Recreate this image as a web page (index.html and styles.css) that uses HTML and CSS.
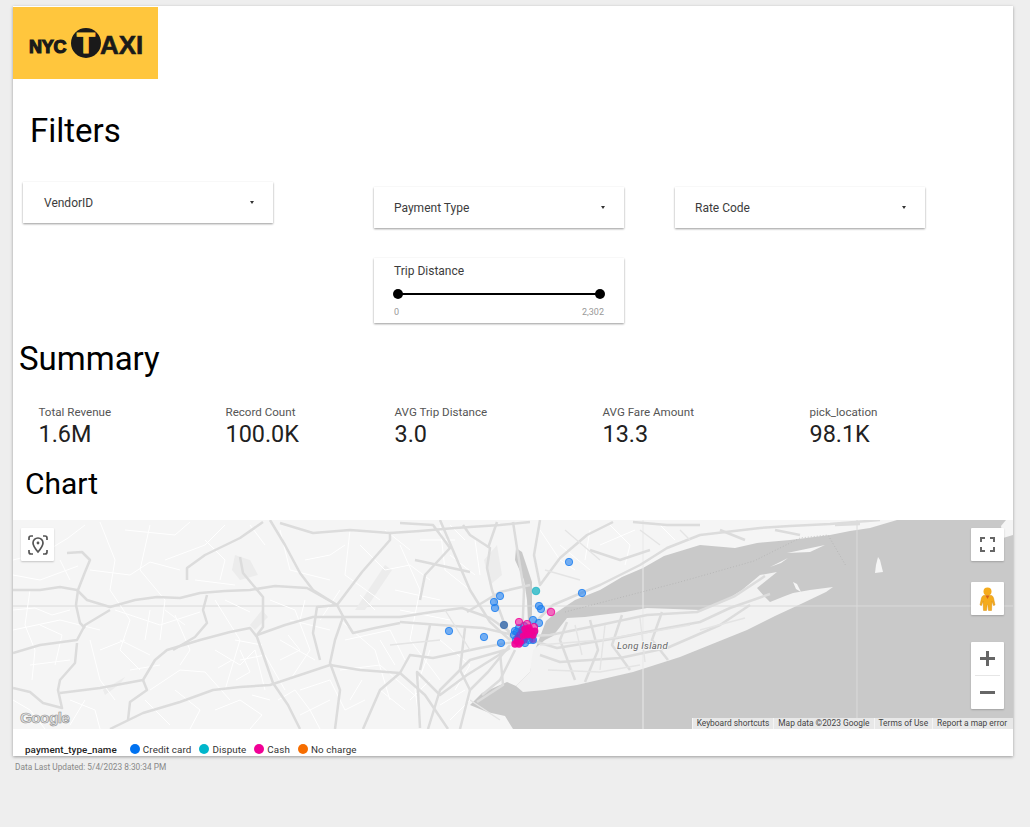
FILE: index.html
```html
<!DOCTYPE html>
<html>
    <head>
        <title>NYC Taxi Report</title>
        <link rel="stylesheet" href="styles.css">
    </head>
    <body>
        <div class="report">
            <div class="logo">
                <span class="logo-nyc">NYC</span>
                <span class="logo-circle">T</span>
                <span class="logo-axi">AXI</span>
            </div>

            <h1 class="title-filters">Filters</h1>

            <div class="filters">
                <div class="filter filter-vendor"><span>VendorID</span><i class="caret"></i></div>
                <div class="filter filter-low"><span>Payment Type</span><i class="caret"></i></div>
                <div class="filter filter-low"><span>Rate Code</span><i class="caret"></i></div>
                <div class="slider-card">
                    <div class="slider-label">Trip Distance</div>
                    <div class="slider-track"><b class="knob"></b><b class="knob"></b></div>
                    <div class="slider-range"><span>0</span><span>2,302</span></div>
                </div>
            </div>

            <h1 class="title-summary">Summary</h1>

            <div class="scorecards">
                <div class="score"><div class="score-label">Total Revenue</div><div class="score-value">1.6M</div></div>
                <div class="score"><div class="score-label">Record Count</div><div class="score-value">100.0K</div></div>
                <div class="score"><div class="score-label">AVG Trip Distance</div><div class="score-value">3.0</div></div>
                <div class="score"><div class="score-label">AVG Fare Amount</div><div class="score-value">13.3</div></div>
                <div class="score"><div class="score-label">pick_location</div><div class="score-value">98.1K</div></div>
            </div>

            <h1 class="title-chart">Chart</h1>

            <div class="map">
                <svg class="map-base" viewBox="13 520 1000 209" width="1000" height="209">
                    <rect x="13" y="520" width="1000" height="209" fill="#f5f5f5"/>

                    <!-- sound and ocean -->
                    <path fill="#c9c9c9" d="M546 621 L557 612 L575 600 L600 590 L622 577 L643 568 L664 556 L700 545 L735 548 L757 543 L790 540 L830 535 L850 531 L870 528 L897 520 L1013 520 L1013 729 L513 729 L505 716 L487 712 L470 705 L482 693 L507 682 L516 686 L530 672 L535 650 Z"/>
                    <path fill="#c9c9c9" d="M516 548 L522 552 L532 582 L532 615 L528 622 L527 600 L524 580 L515 560 Z"/>
                    <path fill="#f5f5f5" d="M1013 520 L1013 535 L1003 538 L1001 526 L1006 520 Z"/>

                    <!-- long island -->
                    <path fill="#f2f2f2" d="M533 650 L545 640 L553 636 L567 618 L585 617 L600 615 L625 612 L647 608 L700 610 L723 602 L742 590 L760 575 L777 572 L762 584 L757 588 L764 596 L770 602 L785 596 L793 593 L810 590 L833 587 L826 592 L803 603 L775 616 L747 630 L680 657 L633 672 L577 685 L545 690 L523 692 L516 686 L530 672 Z"/>
                    <path fill="#f5f5f5" d="M793 582 L797 584 L801 592 L796 589 Z M876 565 L878 557 L880 560 L883 572 L875 573 Z M770 567 L788 558 L781 563 Z M787 553 L825 545 L810 552 Z"/>

                    <!-- grid seams -->
                    <path fill="none" stroke="#dadada" stroke-width="1" d="M857 520 V718 M13 606 H1013"/>
                    <path fill="none" stroke="#e9e9e9" stroke-width="1" d="M643 520 V729"/>
                    <path fill="none" stroke="#aaaaaa" stroke-width=".6" stroke-dasharray="1 2" d="M565 612 L680 582 L754 561 L800 538 L828 535 L846 566"/>

                    <!-- urban patches -->
                    <path fill="#ececec" d="M235 555 L250 560 L258 575 L240 580 L232 570 Z M250 625 L262 610 L268 617 L255 630 Z M103 690 L125 677 L120 684 L105 695 Z M484 560 L497 545 L502 575 L490 585 Z M355 610 L385 565 L392 570 L365 610 Z"/>

                    <!-- small white roads -->
                    <g fill="none" stroke="#ffffff" stroke-width="1">
                        <path d="M13 560 L45 552 L68 538 L85 525 M13 575 L40 580 L78 566 M30 590 L25 625 L35 650 L32 680"/>
                        <path d="M100 522 L115 560 L110 590 L130 620 L120 650 L140 670 M150 525 L140 570 L165 600 L160 640"/>
                        <path d="M13 630 L60 620 L100 630 M90 640 L100 680 L115 700 M30 665 L70 660 M165 560 L205 545 L225 525"/>
                        <path d="M175 615 L190 650 L180 665 M215 600 L240 640 L225 690 M150 690 L180 670 L205 672 L230 700"/>
                        <path d="M270 600 L295 610 L310 650 L290 680 M240 660 L265 655 L285 690 M280 530 L290 570 L330 580 M350 530 L345 575 L380 600"/>
                        <path d="M340 620 L375 650 L390 700 M340 670 L380 665 L420 700 M400 545 L420 590 L410 640 L440 680 M440 525 L445 570 L470 590"/>
                        <path d="M590 530 L585 560 M610 525 L630 545 L625 565 M660 525 L675 540 M540 530 L560 560 L575 570 M430 650 L415 690 L420 725"/>
                        <path d="M13 610 L35 608 L52 615 L70 610 M40 625 L62 635 L55 665 M13 700 L30 710 L45 729 M70 700 L95 710 L100 729"/>
                        <path d="M90 570 L130 575 L150 562 L180 570 M125 530 L175 535 L190 522 M115 610 L160 625 L200 612 M120 640 L150 655"/>
                        <path d="M175 690 L200 710 L190 729 M145 700 L170 725 M215 710 L240 700 L262 715 L250 729 M195 580 L235 585"/>
                        <path d="M215 650 L240 665 L255 650 L265 690 M235 640 L262 645 M225 600 L250 612 M205 540 L225 560 L220 580 M250 525 L265 545"/>
                        <path d="M290 620 L330 630 M280 640 L315 660 M300 690 L330 680 L345 710 L365 700 M300 715 L330 700 M345 640 L390 630 L405 660"/>
                        <path d="M360 545 L385 570 L410 565 L430 580 M395 590 L440 600 M400 610 L450 620 M380 690 L405 710 M440 705 L465 690 M420 540 L455 540"/>
                        <path d="M450 555 L475 575 M440 640 L470 665 L455 690 M475 540 L480 575 M560 545 L590 570 M600 545 L635 530"/>
                        <path d="M280 660 L300 650 L288 635 M278 700 L295 690 L310 710 L320 729 M350 700 L362 680 M20 720 L40 715 M70 725 L85 700"/>
                        <path d="M240 650 L250 672 L236 680 M218 668 L232 660 M252 695 L270 700 M60 560 L70 580 M150 610 L145 640 M100 650 L125 640 M185 625 L165 610 M130 670 L160 665"/>
                        <path d="M305 560 L330 555 L345 545 M320 620 L340 590 M300 620 L305 600 M360 595 L375 610 M380 640 L395 665 M410 700 L430 680 M385 530 L410 550 M465 540 L450 525 M470 700 L450 720"/>
                    </g>

                    <!-- main roads -->
                    <g fill="none" stroke="#dcdcdc" stroke-width="2.5" stroke-linejoin="round">
                        <path d="M13 590 L40 590 L60 587 L77 590 L87 600 L110 607 L135 600 L157 597 L180 598 L200 593 L225 591 L250 590 L275 586 L307 588 L323 597 L337 605"/>
                        <path d="M67 553 L82 552 L90 560 L85 572 L78 590 L76 605 L80 623 L85 628"/>
                        <path d="M13 653 L40 645 L77 640 L85 625 L110 610"/>
                        <path d="M77 643 L75 663 L60 680 L58 690 L62 708 L43 703 L30 692 L13 688"/>
                        <path d="M60 693 L100 688 L143 680 L155 660 L167 650 L200 640 L230 632 L250 628 L257 637 L265 660 L273 683 L288 705 L300 729"/>
                        <path d="M110 729 L143 713 L180 702 L213 690 L240 687 L270 685 L300 675 L330 665 L360 670 L400 673"/>
                        <path d="M143 680 L147 690 L130 702 L128 720"/>
                        <path d="M207 595 L203 610 L207 623 L195 637 L173 650"/>
                        <path d="M187 580 L187 568 L205 555 L240 538 L263 522"/>
                        <path d="M240 557 L243 573 L263 597 L263 627 L257 635"/>
                        <path d="M270 520 L285 545 L300 573 L313 590 L337 605 L345 620 L353 633 L375 628 L400 623"/>
                        <path d="M337 605 L317 607 L313 633 L320 660"/>
                        <path d="M337 605 L362 572 L390 540 L390 533 L350 530 L313 533 L280 523"/>
                        <path d="M343 617 L335 640 L330 663 L340 690 L335 729"/>
                        <path d="M257 635 L285 625 L313 617 L343 617 L400 617"/>
                        <path d="M400 622 L440 625 L483 628 L513 635"/>
                        <path d="M467 612 L500 592 L530 585"/>
                        <path d="M400 673 L410 655 L433 658 L480 648 L513 642"/>
                        <path d="M420 728 L417 672 L440 695 L467 675 L510 648"/>
                        <path d="M500 652 L503 685 L477 702"/>
                        <path d="M400 617 L432 612 L462 608 L490 618 L510 632"/>
                        <path d="M390 533 L420 531 L455 528 L500 525 L530 522"/>
                        <path d="M463 525 L470 535 L490 548 L487 568 L492 590 L503 620 L512 640"/>
                        <path d="M497 522 L488 548"/>
                        <path d="M513 522 L517 548 L524 590 L522 640"/>
                        <path d="M540 520 L534 555 L540 585 L560 558 L587 535 L613 522"/>
                        <path d="M525 632 L553 605 L600 585 L640 565 L667 548 L700 535 L760 528 L790 526 L830 524 L880 520"/>
                        <path d="M633 522 L667 525 L700 525 M590 550 L620 560 L650 550 M720 530 L745 540 M775 530 L800 535 M835 525 L860 524"/>
                        <path d="M440 520 L455 555 L470 590 L490 622 L510 640"/>
                        <path d="M530 640 L557 648 L617 638 L667 628 L700 622 L730 608 L770 594"/>
                        <path d="M530 636 L550 635 L600 625 L647 615 L697 612 L735 596 L765 576"/>
                        <path d="M540 655 L560 662 L620 658 L667 648 L720 625 L750 605"/>
                        <path d="M567 622 L560 640 L575 680 M590 620 L598 650 L585 682 M622 615 L612 645 L630 670 M662 612 L652 640 L668 660"/>
                        <path d="M510 645 L488 672 L470 690 L460 729"/>
                        <path d="M505 650 L470 660 L440 690 L428 729"/>
                        <path d="M515 650 L500 680 L482 695 M400 673 L425 695 L448 729 M363 729 L380 690 L400 673"/>
                        <path d="M430 625 L420 670 M465 628 L460 670 L470 690"/>
                        <path d="M400 523 L433 525 L450 548 L425 575 L420 600 M415 560 L470 572"/>
                    </g>
                    <g fill="none" stroke="#e4e4e4" stroke-width="1.4">
                        <path d="M540 645 L600 640 L650 632 L690 625 M548 670 L600 672 L640 665 M700 630 L745 618 M575 625 L582 655 M605 625 L600 670 M640 618 L645 662"/>
                        <path d="M565 530 L600 560 M545 570 L580 580 M640 530 L660 545 M680 530 L690 540 M470 700 L500 720 M445 610 L470 650 M390 645 L440 640"/>
                    </g>

                    <text class="map-label" x="617" y="649">Long Island</text>

                    <!-- pickups: scattered -->
                    <g class="dots-blue">
                        <circle cx="569" cy="562" r="3.7"/><circle cx="582" cy="593" r="3.7"/>
                        <circle cx="500" cy="596" r="3.7"/><circle cx="494" cy="602" r="3.7"/>
                        <circle cx="495" cy="608" r="3.7"/><circle cx="539" cy="606" r="3.7"/>
                        <circle cx="541" cy="609" r="3.7"/><circle cx="533" cy="620" r="3.7"/>
                        <circle cx="539" cy="623" r="3.7"/><circle cx="449" cy="631" r="3.7"/>
                        <circle cx="484" cy="637" r="3.7"/><circle cx="501" cy="643" r="3.7"/>
                        <circle cx="515" cy="631" r="3.7"/><circle cx="514" cy="635" r="3.7"/>
                        <circle cx="519" cy="628" r="3.7"/><circle cx="524" cy="626" r="3.7"/>
                        <circle cx="533" cy="640" r="3.7"/><circle cx="534" cy="632" r="3.7"/>
                        <circle cx="521" cy="642" r="3.7"/><circle cx="525" cy="643" r="3.7"/>
                        <circle cx="519" cy="636" r="3.7"/><circle cx="516" cy="640" r="3.7"/>
                        <circle cx="529" cy="640" r="3.7"/><circle cx="517" cy="632" r="3.7"/>
                        <circle cx="527" cy="636" r="3.7"/><circle cx="523" cy="632" r="3.7"/>
                    </g>
                    <circle class="dot-dark" cx="504" cy="625" r="3.7"/>
                    <circle class="dot-teal" cx="536" cy="591" r="3.8"/>
                    <g class="dots-pink">
                        <circle cx="551" cy="612" r="3.8"/><circle cx="519" cy="622" r="3.7"/>
                        <circle cx="527" cy="624" r="3.7"/><circle cx="534" cy="627" r="3.7"/>
                    </g>
                    <g class="dots-mix">
                        <circle cx="520" cy="635" r="3.7"/><circle cx="524" cy="640" r="3.7"/>
                        <circle cx="518" cy="638" r="3.7"/><circle cx="533" cy="640" r="3"/>
                        <circle cx="522" cy="630" r="3.7"/><circle cx="527" cy="636" r="3.7"/>
                    </g>
                    <g class="dots-solid">
                        <circle cx="515" cy="644" r="3.7"/><circle cx="519" cy="644" r="3.7"/>
                        <circle cx="517" cy="641" r="3.7"/><circle cx="521" cy="642" r="3"/>
                        <circle cx="523" cy="636" r="3.2"/><circle cx="526" cy="634" r="3.7"/>
                        <circle cx="528" cy="631" r="3.7"/><circle cx="525" cy="629" r="3.7"/>
                        <circle cx="530" cy="634" r="3.7"/><circle cx="533" cy="635" r="3.7"/>
                        <circle cx="529" cy="628" r="3.7"/><circle cx="535" cy="631" r="3.4"/>
                        <circle cx="531" cy="631" r="3.7"/><circle cx="528" cy="635" r="3.2"/>
                    </g>
                </svg>

                <div class="google-mark">Google</div>

                <div class="map-btn btn-locate">
                    <svg viewBox="0 0 34 34" width="34" height="34" fill="none" stroke="#555" stroke-width="1.7">
                        <path d="M8 12 V10 Q8 8 10 8 H12 M22 8 H24 Q26 8 26 10 V12 M8 22 V24 Q8 26 10 26 H12 M22 26 H24 Q26 26 26 24 V22"/>
                        <path d="M17 24 Q12 18 12 15 A5 5 0 0 1 22 15 Q22 18 17 24 Z"/>
                        <circle cx="17" cy="15" r="1.4" fill="#555" stroke="none"/>
                    </svg>
                </div>
                <div class="map-btn btn-full">
                    <svg viewBox="0 0 33 33" width="33" height="33" fill="none" stroke="#666" stroke-width="2">
                        <path d="M10 14 V10 H14 M19 10 H23 V14 M10 19 V23 H14 M19 23 H23 V19"/>
                    </svg>
                </div>
                <div class="map-btn btn-pegman">
                    <svg viewBox="0 0 33 33" width="33" height="33">
                        <circle cx="16.5" cy="9.5" r="4" fill="#f5ab1c"/>
                        <path d="M12.5 13.500 H20.500 Q22 14 22.500 16 L24 23 L22.500 23.500 L21 19 L20.500 28.500 H17.500 L16.800 22.500 H16.200 L15.500 28.500 H12.500 L12 19 L10.500 23.500 L9 23 L10.500 16 Q11 14 12.500 13.500 Z" fill="#f5ab1c" stroke="#d98f10" stroke-width=".5"/>
                        <path d="M14.500 13.500 L16.500 17 L18.500 13.500 Z" fill="#d9601a"/>
                    </svg>
                </div>
                <div class="zoom-box">
                    <div class="zoom-btn"><svg viewBox="0 0 33 33" width="33" height="33"><path d="M15 9 H18 V15 H24 V18 H18 V24 H15 V18 H9 V15 H15 Z" fill="#666"/></svg></div>
                    <div class="zoom-sep"></div>
                    <div class="zoom-btn"><svg viewBox="0 0 33 33" width="33" height="33"><rect x="9" y="15" width="15" height="3" fill="#666"/></svg></div>
                </div>

                <div class="attrib">
                    <span>Keyboard shortcuts</span>
                    <span>Map data ©2023 Google</span>
                    <span>Terms of Use</span>
                    <span>Report a map error</span>
                </div>
            </div>

            <div class="legend">
                <b class="legend-title">payment_type_name</b>
                <span class="legend-item"><i class="swatch swatch-blue"></i>Credit card</span>
                <span class="legend-item"><i class="swatch swatch-teal"></i>Dispute</span>
                <span class="legend-item"><i class="swatch swatch-pink"></i>Cash</span>
                <span class="legend-item"><i class="swatch swatch-orange"></i>No charge</span>
            </div>
        </div>

        <div class="updated">Data Last Updated: 5/4/2023 8:30:34 PM</div>
    </body>
</html>
```

FILE: styles.css
```css
body {
    margin: 0;
    height: 827px;
    overflow: hidden;
    background-color: #eeeeee;
    font-family: Roboto, Arial, sans-serif;
    color: #000;
}
.report {
    width: 1000px;
    height: 750px;
    margin: 6px 0 0 13px;
    padding-top: 1px;
    box-sizing: border-box;
    background-color: #fff;
    box-shadow: 0 1px 3px rgba(0,0,0,0.35);
    overflow: hidden;
}

/* logo */
.logo {
    width: 145px;
    height: 72px;
    background-color: #ffc63d;
    display: flex;
    align-items: center;
    padding-left: 16px;
    box-sizing: border-box;
    color: #1a1a1a;
    font-family: "Liberation Sans", Arial, sans-serif;
    font-weight: bold;
}
.logo-nyc {
    font-size: 18px;
    line-height: 18px;
    margin-top: 7px;
    width: 42px;
    letter-spacing: -0.2px;
    -webkit-text-stroke: 1.2px #1a1a1a;
}
.logo-circle {
    width: 30px;
    height: 30px;
    flex: none;
    border-radius: 50%;
    background-color: #1a1a1a;
    color: #ffc63d;
    font-size: 30px;
    line-height: 30px;
    text-align: center;
    -webkit-text-stroke: 1px #ffc63d;
}
.logo-axi {
    font-size: 26px;
    line-height: 26px;
    margin-left: -1px;
    margin-top: 4px;
    -webkit-text-stroke: 0.6px #1a1a1a;
}

/* headings */
h1 {
    margin: 0;
    font-weight: 400;
    font-size: 33px;
    line-height: 42px;
}
.title-filters {
    margin-top: 31px;
    padding-left: 17px;
}
.title-summary {
    margin-top: 15px;
    padding-left: 6px;
}
.title-chart {
    margin-top: 15px;
    padding-left: 12px;
    font-size: 30px;
    line-height: 42px;
}

/* filters */
.filters {
    display: grid;
    grid-template-columns: 351px 301px 250px;
    row-gap: 30px;
    margin-top: 30px;
    padding-left: 10px;
}
.filter,
.slider-card {
    width: 250px;
    background-color: #fff;
    box-shadow: 0 1px 2px rgba(0,0,0,0.4);
    box-sizing: border-box;
    color: #3c3c3c;
    font-size: 12px;
}
.filter {
    height: 41px;
    display: flex;
    align-items: center;
    justify-content: space-between;
    padding: 0 19px 0 20px;
}
.filter-vendor {
    padding-left: 21px;
}
.filter-low {
    margin-top: 5px;
}
.caret {
    width: 0;
    height: 0;
    border-left: 2.5px solid transparent;
    border-right: 2.5px solid transparent;
    border-top: 3px solid #333;
}
.slider-card {
    grid-column: 2;
    height: 65px;
    padding: 6px 20px 0 20px;
}
.slider-label {
    line-height: 14px;
}
.slider-track {
    height: 2px;
    margin: 15px 4px 0 4px;
    background-color: #000;
    display: flex;
    justify-content: space-between;
    align-items: center;
}
.knob {
    width: 10px;
    height: 10px;
    border-radius: 50%;
    background-color: #000;
    margin: 0 -5px;
}
.slider-range {
    display: flex;
    justify-content: space-between;
    margin-top: 12px;
    font-size: 9px;
    line-height: 11px;
    color: #999;
}

/* scorecards */
.scorecards {
    display: grid;
    grid-template-columns: 187px 169px 208px 207px 1fr;
    margin-top: 25px;
    padding-left: 25.500px;
}
.score-label {
    font-size: 11.600px;
    line-height: 14px;
    color: #555;
}
.score-value {
    font-size: 23.400px;
    line-height: 28px;
    margin-top: 1px;
    color: #212121;
}

/* map */
.map {
    position: relative;
    height: 209px;
    margin-top: 15px;
    overflow: hidden;
}
.map-base {
    display: block;
}
.map-label {
    font-family: Roboto, Arial, sans-serif;
    font-size: 9.500px;
    font-style: italic;
    fill: #666;
    stroke: #f5f5f5;
    stroke-width: 2px;
    paint-order: stroke;
    letter-spacing: 0.3px;
}
.dots-blue circle {
    fill: #1a7df0;
    fill-opacity: 0.6;
    stroke: #1a7df0;
    stroke-width: 0.8;
}
.dots-pink circle {
    fill: #ee1e9f;
    fill-opacity: 0.65;
    stroke: #f10096;
    stroke-width: 0.8;
}
.dots-solid circle {
    fill: #f10096;
    fill-opacity: 0.92;
}
.dots-mix circle {
    fill: #7a35c8;
    fill-opacity: 0.7;
}
.dot-dark {
    fill: #567fb4;
    stroke: #3e6fae;
    stroke-width: 0.8;
}
.dot-teal {
    fill: #4fc4cf;
    stroke: #22b6c6;
    stroke-width: 0.8;
}
.map-btn,
.zoom-box {
    position: absolute;
    background-color: #fff;
    border-radius: 1px;
    box-shadow: 0 1px 2px rgba(0,0,0,0.2);
}
.map-btn {
    width: 33px;
    height: 33px;
}
.map-btn svg,
.zoom-btn svg {
    display: block;
}
.btn-locate {
    left: 8px;
    top: 8px;
}
.btn-full {
    right: 9px;
    top: 8px;
}
.btn-pegman {
    right: 9px;
    top: 62px;
}
.zoom-box {
    right: 9px;
    top: 122px;
    width: 33px;
    height: 67px;
}
.zoom-btn {
    height: 33px;
}
.zoom-sep {
    height: 1px;
    margin: 0 4px;
    background-color: #e6e6e6;
}
.google-mark {
    position: absolute;
    left: 7px;
    bottom: 2px;
    font-family: "Liberation Sans", Arial, sans-serif;
    font-size: 15.500px;
    font-weight: bold;
    line-height: 18px;
    letter-spacing: -0.7px;
    color: #e4e4e4;
    -webkit-text-stroke: 0.6px #8d8d8d;
}
.attrib {
    position: absolute;
    right: 0;
    bottom: 0;
    height: 11px;
    display: flex;
    background-color: #e8e8e8;
    font-size: 8.400px;
    line-height: 11px;
    color: #444;
}
.attrib span {
    padding: 0 4px;
    border-left: 1px solid #f5f5f5;
}
.attrib span:last-child {
    padding-right: 6px;
}

/* legend */
.legend {
    display: flex;
    align-items: center;
    height: 27px;
    padding: 13px 0 0 12px;
    box-sizing: border-box;
    font-size: 9.800px;
    color: #333;
    letter-spacing: 0.1px;
}
.legend-title {
    font-weight: 500;
    color: #222;
    margin-right: 13px;
}
.legend-item {
    display: flex;
    align-items: center;
    margin-right: 8px;
}
.swatch {
    width: 10px;
    height: 10px;
    border-radius: 50%;
    margin-right: 3px;
}
.swatch-blue {
    background-color: #0072f0;
}
.swatch-teal {
    background-color: #00b6cb;
}
.swatch-pink {
    background-color: #f10096;
}
.swatch-orange {
    background-color: #f66d00;
}

.updated {
    margin: 6px 0 0 15px;
    font-size: 8.300px;
    line-height: 10px;
    color: #888;
}
```
